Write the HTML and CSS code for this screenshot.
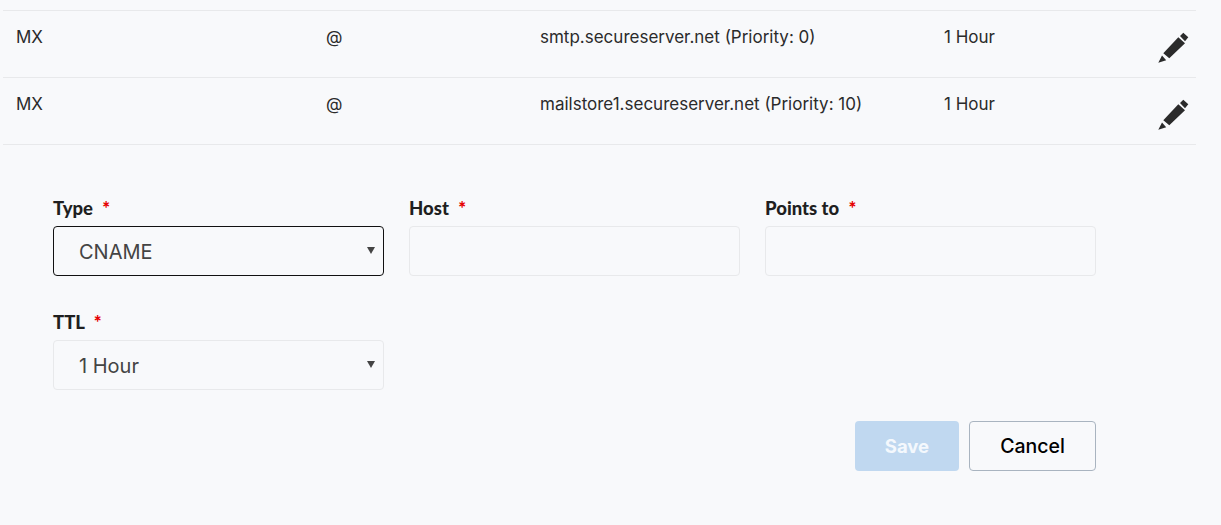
FILE: index.html
```html
<!DOCTYPE html>
<html lang="en">

<head>
    <meta charset="UTF-8">
    <meta name="viewport" content="width=device-width, initial-scale=1.0">
    <title>DNS Records</title>
    <link rel="stylesheet" href="styles.css">
</head>

<body>
<!-- records -->
<div class="records">
    <div class="record">
        <span>MX</span>
        <span>@</span>
        <span>smtp.secureserver.net (Priority: 0)</span>
        <span>1 Hour</span>
        <svg class="edit" viewBox="0 0 32 32"><path d="M6.3 21.3 21.3 5.3 28 11.3 12.3 26.3zM23 4 26.3.7 31.3 5.3 28 9.3zM1.3 30.7 5 23.6 9.2 28.2z"/></svg>
    </div>
    <div class="record">
        <span>MX</span>
        <span>@</span>
        <span>mailstore1.secureserver.net (Priority: 10)</span>
        <span>1 Hour</span>
        <svg class="edit" viewBox="0 0 32 32"><path d="M6.3 21.3 21.3 5.3 28 11.3 12.3 26.3zM23 4 26.3.7 31.3 5.3 28 9.3zM1.3 30.7 5 23.6 9.2 28.2z"/></svg>
    </div>
</div>

<!-- add record form -->
<form class="record-form">
    <div class="form-row">
        <div class="field">
            <label>Type <em>*</em></label>
            <div class="select-wrap">
                <select class="control control-active">
                    <option>CNAME</option>
                </select>
            </div>
        </div>
        <div class="field">
            <label>Host <em>*</em></label>
            <input class="control" type="text">
        </div>
        <div class="field">
            <label>Points to <em>*</em></label>
            <input class="control" type="text">
        </div>
    </div>
    <div class="form-row">
        <div class="field">
            <label>TTL <em>*</em></label>
            <div class="select-wrap">
                <select class="control">
                    <option>1 Hour</option>
                </select>
            </div>
        </div>
    </div>
    <div class="actions">
        <button class="btn btn-save" type="button">Save</button>
        <button class="btn btn-cancel" type="button">Cancel</button>
    </div>
</form>
</body>

</html>
```

FILE: styles.css
```css
body {
    font-family: Inter, "Liberation Sans", sans-serif;
    margin: 0;
    padding: 10px 25px 0 3px;
    background-color: #f8f9fb;
    color: #2b2b2b;
}

/* records */
.records {
    border-top: 1px solid #e8e9eb;
}

.record {
    display: grid;
    grid-template-columns: 310px 214px 404px 1fr;
    padding: 16px 7px 0 13px;
    box-sizing: border-box;
    height: 67px;
    border-bottom: 1px solid #e8e9eb;
    font-size: 17px;
    line-height: 20px;
    position: relative;
}

.edit {
    position: absolute;
    right: 7px;
    top: 21px;
    width: 32px;
    height: 32px;
    fill: #2b2b2b;
}

/* form */
.record-form {
    padding: 0 0 0 50px;
    width: 1043px;
}

.form-row {
    display: flex;
    gap: 25px;
    padding-top: 53px;
}

.form-row + .form-row {
    padding-top: 36px;
}

.field {
    width: 331px;
}

label {
    display: block;
    height: 28px;
    font-family: Lato, sans-serif;
    font-size: 18.5px;
    font-weight: 900;
    line-height: 20px;
    color: #1f1f1f;
}

label em {
    font-style: normal;
    color: #e60000;
    margin-left: 5px;
}

.control {
    display: block;
    width: 100%;
    height: 50px;
    box-sizing: border-box;
    padding: 2px 25px 0;
    border: 1px solid #e8e9eb;
    border-radius: 4px;
    background-color: transparent;
    font-family: Inter, sans-serif;
    font-size: 20px;
    color: #444;
    outline: none;
    appearance: none;
}

.control-active {
    border-color: #111;
}

.select-wrap {
    position: relative;
}

/* small arrow of the select */
.select-wrap::after {
    content: "";
    position: absolute;
    right: 9px;
    top: 21px;
    border-left: 4px solid transparent;
    border-right: 4px solid transparent;
    border-top: 7px solid #444;
}

.actions {
    display: flex;
    justify-content: flex-end;
    gap: 10px;
    padding-top: 31px;
}

.btn {
    height: 50px;
    border-radius: 4px;
    font-family: Inter, sans-serif;
    font-size: 19.5px;
    font-weight: 500;
}

.btn-save {
    width: 104px;
    border: none;
    background-color: #c0d8f0;
    color: #f4f8fd;
    font-size: 18.5px;
    font-weight: 700;
}

.btn-cancel {
    width: 127px;
    border: 1px solid #a9b4c0;
    background-color: transparent;
    color: #000;
}
```
